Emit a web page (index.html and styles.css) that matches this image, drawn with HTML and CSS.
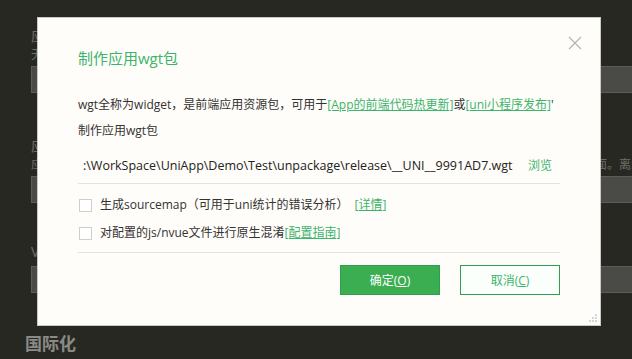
FILE: index.html
```html
<!DOCTYPE html>
<html lang="zh-CN">
<head>
  <meta charset="UTF-8">
  <title>制作应用wgt包</title>
  <link rel="stylesheet" href="styles.css">
</head>
<body>
  <div class="settings">
    <div class="field">
      <div class="field-label">应用名称</div>
      <div class="field-desc">无需填写</div>
      <div class="field-input"></div>
    </div>
    <div class="field">
      <div class="field-label">应用版本名称</div>
      <div class="field-desc">应用版本号，必须是整数；升级时必须高于上一次设置的值，否则用户无法覆盖安装新版本的应用到手机桌面。离线打包</div>
      <div class="field-input"></div>
    </div>
    <div class="field field-last">
      <div class="field-label">Vue版本选择</div>
      <div class="field-input"></div>
    </div>
    <h3 class="section-title">国际化</h3>
  </div>

  <div class="dialog">
    <button class="dialog-close" aria-label="关闭">
      <svg width="14" height="14" viewBox="0 0 14 14"><path d="M1 1L13 13M13 1L1 13" stroke="#b4b4b4" stroke-width="1.2" fill="none"/></svg>
    </button>
    <h2 class="dialog-title">制作应用wgt包</h2>

    <p class="dialog-desc">wgt全称为widget，是前端应用资源包，可用于<a href="#">[App的前端代码热更新]</a>或<a href="#">[uni小程序发布]</a>'<br>制作应用wgt包</p>

    <div class="path-row">
      <span class="path-text">:\WorkSpace\UniApp\Demo\Test\unpackage\release\__UNI__9991AD7.wgt</span>
      <a href="#" class="browse">浏览</a>
    </div>

    <div class="options">
      <label class="option"><span class="check"></span>生成sourcemap（可用于uni统计的错误分析）<a href="#" class="gap">[详情]</a></label>
      <label class="option"><span class="check"></span>对配置的js/nvue文件进行原生混淆<a href="#">[配置指南]</a></label>
    </div>

    <div class="actions">
      <button class="btn btn-primary">确定(<u>O</u>)</button>
      <button class="btn btn-default">取消(<u>C</u>)</button>
    </div>

    <svg class="grip" width="9" height="9" viewBox="0 0 9 9">
      <rect x="6" y="0" width="2" height="2" fill="#d6d6d6"/>
      <rect x="3" y="3" width="2" height="2" fill="#d6d6d6"/>
      <rect x="6" y="3" width="2" height="2" fill="#d6d6d6"/>
      <rect x="0" y="6" width="2" height="2" fill="#d6d6d6"/>
      <rect x="3" y="6" width="2" height="2" fill="#d6d6d6"/>
      <rect x="6" y="6" width="2" height="2" fill="#d6d6d6"/>
    </svg>
  </div>
</body>
</html>
```

FILE: styles.css
```css
:root {
  --bg: #272822;
  --green: #3cb46c;
  --green-dark: #2e9f4e;
  --text: #333;
  --line: #e2e2e2;
}

* {
  box-sizing: border-box;
  margin: 0;
  padding: 0;
}

body {
  background: var(--bg);
  font-family: "Open Sans", "Noto Sans CJK SC", sans-serif;
  font-size: 12px;
  width: 632px;
  height: 359px;
  overflow: hidden;
  position: relative;
}

/* page behind the dialog */
.settings {
  padding: 27px 0 0 31px;
  color: #6f6f6a;
  overflow: hidden;
}

.field {
  margin-bottom: 44px;
}

.field-last {
  margin-bottom: 0;
}

.field + .field-last {
  margin-top: -4px;
}

.field-label {
  font-size: 14px;
  line-height: 18px;
}

.field-desc {
  font-size: 12px;
  line-height: 16px;
  white-space: nowrap;
  overflow: hidden;
  margin-top: 2px;
}

.field-input {
  height: 27px;
  margin-top: 3px;
  background: #4a4a47;
  border: 1px solid #5c5c58;
  border-right: none;
}

.field-last .field-input {
  margin-top: 5px;
}

.section-title {
  font-size: 17px;
  line-height: 24px;
  color: #8a8a86;
  font-weight: bold;
  margin: 39px 0 0 -6px;
}

/* dialog */
.dialog {
  position: absolute;
  left: 37px;
  top: 17px;
  width: 564px;
  height: 309px;
  background: #fffdf9;
  border: 1px solid #c8c8c4;
  padding: 30px 40px 0 40px;
}

.dialog-close {
  position: absolute;
  top: 18px;
  right: 18px;
  border: none;
  background: none;
  width: 14px;
  height: 14px;
  display: flex;
}

.dialog-title {
  font-size: 15px;
  font-weight: normal;
  color: var(--green);
  line-height: 20px;
}

.dialog-desc {
  margin-top: 24px;
  line-height: 26px;
  color: var(--text);
  white-space: nowrap;
}

a {
  color: var(--green);
  text-decoration: underline;
}

.path-row {
  margin-top: 9px;
  display: flex;
  align-items: center;
  justify-content: space-between;
  line-height: 26px;
  padding: 0 8px 4px 5px;
  color: #222;
  border-bottom: 1px solid var(--line);
  white-space: nowrap;
}

.path-text {
  font-size: 12.5px;
}

.path-row .browse {
  text-decoration: none;
}

.options {
  padding-top: 7px;
  padding-bottom: 5px;
  border-bottom: 1px solid var(--line);
}

.option {
  display: flex;
  align-items: center;
  line-height: 28px;
  color: var(--text);
  white-space: nowrap;
}

.option .gap {
  margin-left: 6px;
}

.check {
  width: 13px;
  height: 13px;
  border: 1px solid #cfcfcf;
  background: #fff;
  margin: 0 8px 0 1px;
}

.actions {
  display: flex;
  justify-content: flex-end;
  gap: 20px;
  margin-top: 12px;
}

.btn {
  width: 100px;
  height: 30px;
  font-family: inherit;
  font-size: 12px;
  border: 1px solid var(--green-dark);
}

.btn-primary {
  background: #3aae50;
  color: #fff;
}

.btn-default {
  background: #fbfffb;
  color: var(--green);
}

.grip {
  position: absolute;
  right: 2px;
  bottom: 2px;
}
```
